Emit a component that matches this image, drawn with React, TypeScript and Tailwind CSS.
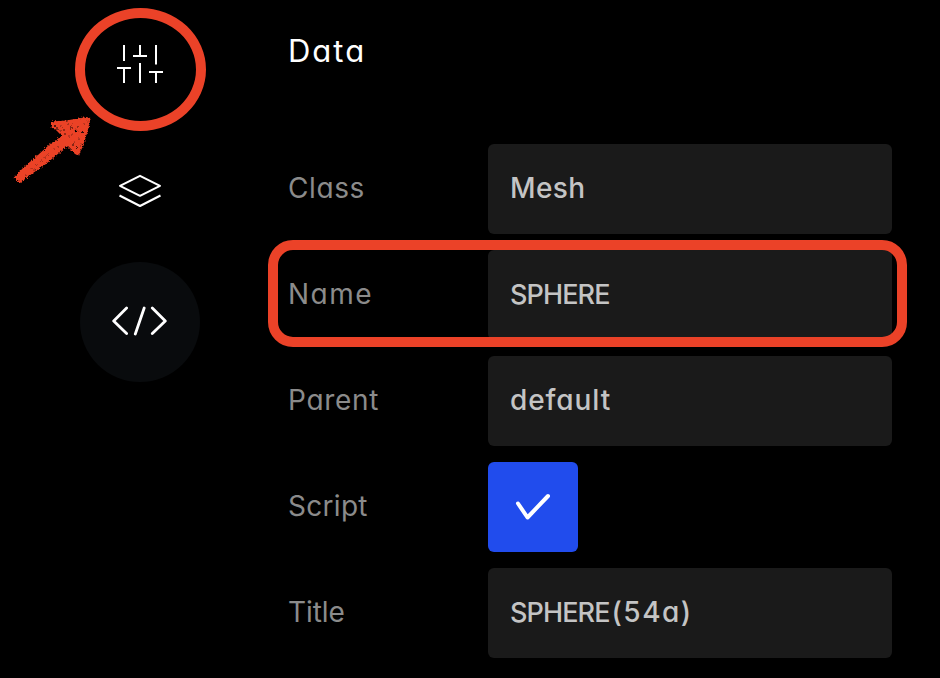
const rows = [
  { label: "Class", parts: [{ text: "Mesh", style: "pb-[2px] text-[28px] tracking-[0.4px]" }], labelGap: "tracking-[0.6px]" },
  { label: "Name", parts: [{ text: "SPHERE", style: "text-[27px] tracking-[-0.9px]" }], labelGap: "tracking-[1.5px]" },
  { label: "Parent", parts: [{ text: "default", style: "pb-[2px] text-[28px] tracking-[0.9px]" }], labelGap: "tracking-[0.7px]" },
  { label: "Script", parts: [], labelGap: "tracking-[0.3px]" },
  {
    label: "Title",
    parts: [
      { text: "SPHERE", style: "text-[27px] tracking-[-0.9px]" },
      { text: "(54a)", style: "ml-[2px] pb-[2px] text-[28px] tracking-[1.5px]" },
    ],
    labelGap: "tracking-[-0.1px]",
  },
];

const specks = [
  [55, 126, 0.9], [57, 129, 0.8], [61, 126, 0.6], [64, 130, 0.7], [68, 124, 0.6],
  [71, 128, 0.8], [73, 124, 0.6], [76, 131, 1.3], [78, 127, 0.7], [82, 132, 1.1],
  [84, 124, 0.6], [65, 134, 0.7], [69, 137, 0.6], [73, 145, 0.8], [77, 148, 0.9],
  [75, 142, 0.6], [79, 139, 0.6], [81, 145, 0.5], [72, 134, 0.5], [60, 131, 0.6],
  [54, 149, 0.5], [48, 155, 0.6], [41, 161, 0.6], [37, 165, 0.6], [31, 168, 0.5],
  [26, 175, 0.6], [58, 146, 0.6], [45, 158, 0.5], [34, 170, 0.5], [87, 121, 0.4],
];

function Sliders() {
  return (
    <svg className="h-10 w-12" viewBox="0 0 48 40" fill="none" stroke="white" strokeWidth="2">
      <path d="M8 2v16M1 25h14M8 25v15M24 2v11M17 13h14M24 20v20M40 2v19.500M33 29h14M40 29v11" />
    </svg>
  );
}

function Layers() {
  return (
    <svg className="h-9 w-12" viewBox="0 0 48 36" fill="none" stroke="white" strokeWidth="2" strokeLinejoin="round">
      <path d="M4 12.800 24 2.800 44 12.800 24 22.800ZM3.500 22.500 24 33 44.500 22.500" />
    </svg>
  );
}

function Code() {
  return (
    <svg className="h-8 w-14" viewBox="0 0 56 32" fill="none" stroke="white" strokeWidth="2.8" strokeLinejoin="round" strokeLinecap="round">
      <path d="M14.600 2 1.700 15 14.600 27.600M32.200 2 23.300 28M40.300 2 53.300 15 40.300 27.600" />
    </svg>
  );
}

export default function App() {
  return (
    <main className="relative flex h-[678px] w-[940px] overflow-hidden bg-black font-['Inter',sans-serif] [font-feature-settings:'cv11','calt'_0]">
      <nav className="flex w-[280px] shrink-0 flex-col items-center pt-[43px]">
        <Sliders />
        <div className="mt-[90px]"><Layers /></div>
        <div className="mt-[53px] flex size-[120px] items-center justify-center rounded-full bg-[#090b0d]">
          <Code />
        </div>
      </nav>
      <section className="w-[612px] pl-2">
        <h1 className="h-36 pt-[33px] text-[31px] leading-[36px] tracking-[2px] text-white">Data</h1>
        <div className="flex flex-col gap-4">
          {rows.map((row) => (
            <div key={row.label} className="flex h-[90px] items-center">
              <span className={`w-[200px] pb-[2px] text-[28px] font-normal text-[#8b8b8b] ${row.labelGap}`}>{row.label}</span>
              {row.parts.length > 0 ? (
                <div className="flex h-[90px] flex-1 items-center rounded-md bg-[#1a1a1a] pl-[22px] font-medium text-[#c4c4c4]">
                  <div className="flex items-baseline">
                    {row.parts.map((part) => <span key={part.text} className={part.style}>{part.text}</span>)}
                  </div>
                </div>
              ) : (
                <div className="flex size-[90px] items-center justify-center rounded-md bg-[#214ced]">
                  <svg className="size-10" viewBox="0 0 40 40" fill="none" stroke="white" strokeWidth="4" strokeLinecap="round" strokeLinejoin="round">
                    <path d="M5 16.500 14.500 30.500 35 9" />
                  </svg>
                </div>
              )}
            </div>
          ))}
        </div>
      </section>
      <div className="absolute top-2 left-[75px] h-[123px] w-[131px] rounded-[50%] border-[10px] border-[#eb4228]" />
      <div className="absolute top-[240px] left-[268px] h-[107px] w-[639px] rounded-[25px] border-[10px] border-[#eb4228]" />
      <svg className="absolute top-[100px] left-0 h-[100px] w-[110px]" viewBox="0 100 110 100">
        <defs>
          <filter id="rough" x="-10%" y="-10%" width="120%" height="120%">
            <feTurbulence type="fractalNoise" baseFrequency="0.6" numOctaves="2" seed="4" />
            <feDisplacementMap in="SourceGraphic" scale="4" xChannelSelector="R" yChannelSelector="G" />
          </filter>
        </defs>
        <g filter="url(#rough)">
          <path fill="#eb4228" d="M51 121.500 66 120.500 87 117 90.500 119 89.500 124 86 137 82 148 79 156 75 154 67 146 59 153 46 164 33 173 20 183 13.500 178 24 167 38 155 50 144 62 136 57 131 51 127Z" />
          {specks.map(([x, y, r]) => <circle key={`${x}-${y}`} cx={x} cy={y} r={r} fill="black" />)}
        </g>
      </svg>
    </main>
  );
}
